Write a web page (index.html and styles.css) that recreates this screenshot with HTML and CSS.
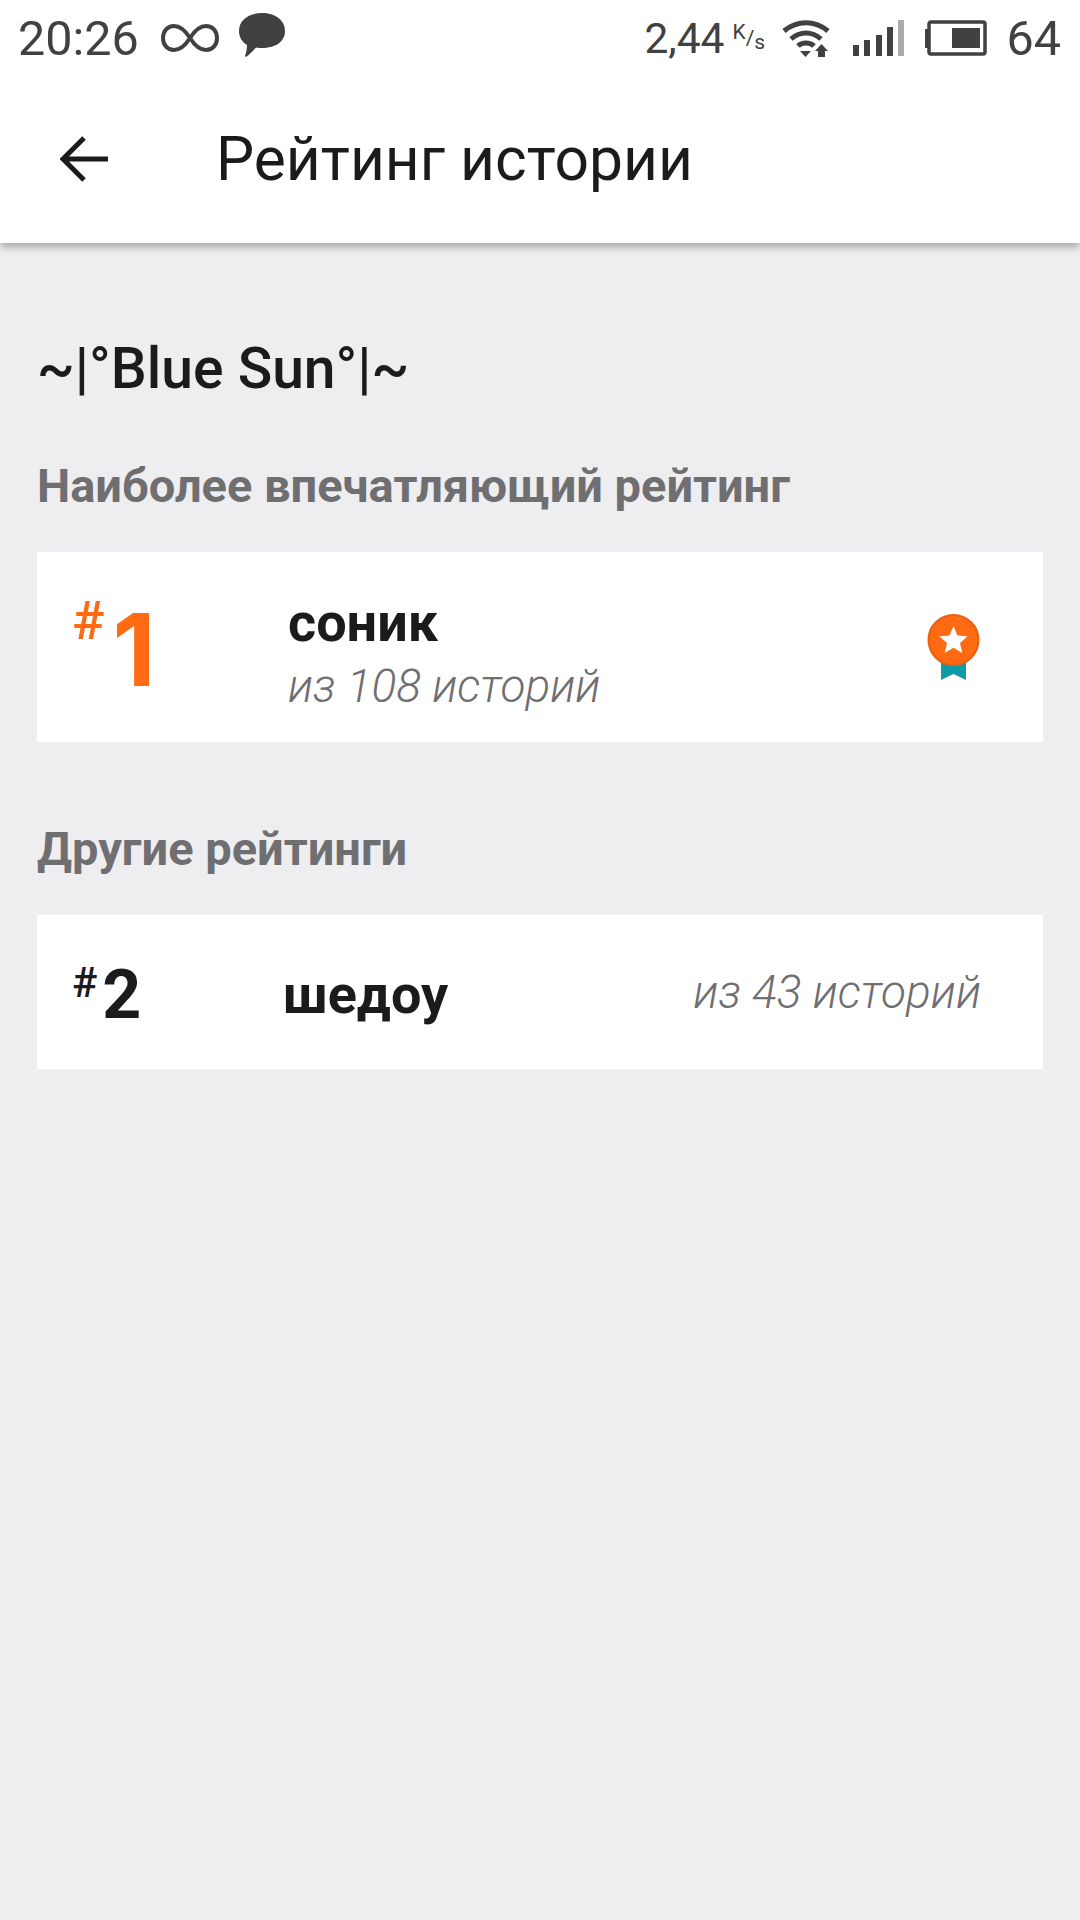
FILE: index.html
```html
<!DOCTYPE html>
<html lang="ru">
<head>
    <meta charset="UTF-8">
    <title>Рейтинг истории</title>
    <link rel="stylesheet" href="styles.css">
</head>
<body>
    <header class="header">
        <div class="status-bar">
            <span class="clock">20:26</span>
            <svg class="icon-infinity" width="58" height="30" viewBox="0 0 58 30">
                <path d="M29 15C24 7 19 3 13 3 6.500 3 2 8 2 15s4.500 12 11 12c6 0 11-4 16-12s10-12 16-12c6.500 0 11 5 11 12s-4.500 12-11 12c-6 0-11-4-16-12z" fill="none" stroke="#414042" stroke-width="4"/>
            </svg>
            <svg class="icon-chat" width="48" height="45" viewBox="0 0 48 45">
                <path d="M24 0C37 0 47 7 47 18S37 35 24 35C22 35 20 35 18 34.500 15 38 11 42 8 44L7 43C8 40 9 36 9 32 4 29 1 24 1 18 1 7 11 0 24 0z" fill="#414042"/>
            </svg>
            <span class="spacer"></span>
            <span class="speed">2,44</span>
            <span class="speed-unit"><sup>K</sup>/<sub>s</sub></span>
            <svg class="icon-wifi" width="48" height="37" viewBox="0 0 48 37">
                <g fill="none" stroke="#414042" stroke-width="5">
                    <path d="M2 11C15 0 33 0 46 11"/>
                    <path d="M9 19C18 11 30 11 39 19"/>
                    <path d="M16 26C20 22 28 22 32 26"/>
                </g>
                <path d="M18 31H29L23.500 37z" fill="#414042"/>
                <path d="M36 37V31H33L39.500 24 46 31H43V37z" fill="#414042"/>
            </svg>
            <svg class="icon-signal" width="52" height="36" viewBox="0 0 52 36">
                <rect x="0" y="25" width="6" height="11" fill="#414042"/>
                <rect x="11" y="20" width="6" height="16" fill="#414042"/>
                <rect x="23" y="15" width="6" height="21" fill="#414042"/>
                <rect x="34" y="7" width="6" height="29" fill="#414042"/>
                <rect x="45" y="0" width="6" height="36" fill="#acacac"/>
            </svg>
            <svg class="icon-battery" width="64" height="36" viewBox="0 0 64 36">
                <path d="M4 9V28" stroke="#414042" stroke-width="4" fill="none"/>
                <rect x="6" y="2" width="56" height="32" rx="2" fill="none" stroke="#414042" stroke-width="3.500"/>
                <rect x="29" y="8" width="28" height="20" fill="#414042"/>
            </svg>
            <span class="level">64</span>
        </div>
        <div class="toolbar">
            <svg class="icon-back" width="48" height="48" viewBox="0 0 48 48">
                <path d="M48 24H4M24 3 3 24 24 45" fill="none" stroke="#1b1a1c" stroke-width="5"/>
            </svg>
            <h1 class="toolbar-title">Рейтинг истории</h1>
        </div>
    </header>

    <main class="content">
        <h2 class="story-title">~|°Blue Sun°|~</h2>

        <h3 class="section-label">Наиболее впечатляющий рейтинг</h3>
        <div class="card card-top">
            <div class="rank rank-top"><span class="hash">#</span><span class="num">1</span></div>
            <div class="card-body">
                <div class="tag">соник</div>
                <div class="count">из 108 историй</div>
            </div>
            <svg class="medal" width="54" height="67" viewBox="0 0 54 67">
                <path d="M14 44H39V66L26.500 60 14 66z" fill="#0e9aa7"/>
                <circle cx="26.500" cy="26" r="25" fill="#ff6a13" stroke="#ec5f10" stroke-width="2"/>
                <path d="M26.500 12 30.500 21.500 40.500 22.300 33 29 35.300 39 26.500 33.800 17.700 39 20 29 12.500 22.300 22.500 21.500z" fill="#fff"/>
            </svg>
        </div>

        <h3 class="section-label section-other">Другие рейтинги</h3>
        <div class="card card-other">
            <div class="rank"><span class="hash">#</span><span class="num">2</span></div>
            <div class="tag tag-other">шедоу</div>
            <div class="count">из 43 историй</div>
        </div>
    </main>
</body>
</html>
```

FILE: styles.css
```css
* {
    box-sizing: border-box;
}
body {
    margin: 0;
    min-height: 1920px;
    background: #eeedf0;
    font-family: Roboto, "Noto Sans", sans-serif;
    color: #1b1a1c;
}
h1, h2, h3 {
    margin: 0;
}
svg {
    display: block;
    flex: none;
}
.header {
    height: 243px;
    background: #fff;
    box-shadow: 0 4px 8px rgba(0, 0, 0, 0.3);
}
.status-bar {
    display: flex;
    align-items: center;
    height: 76px;
    padding: 0 19px 0 18px;
    color: #414042;
    font-size: 48.500px;
}
.icon-infinity {
    margin-left: 22px;
}
.icon-chat {
    margin-left: 19px;
    margin-top: -5px;
}
.spacer {
    flex: 1;
}
.speed {
    font-size: 42.500px;
}
.speed-unit {
    width: 30px;
    margin-left: 8px;
    font-size: 21px;
    line-height: 1;
    white-space: nowrap;
}
.speed-unit sup,
.speed-unit sub {
    font-size: 21px;
    vertical-align: baseline;
    position: relative;
}
.speed-unit sup {
    top: -6px;
}
.speed-unit sub {
    top: 4px;
}
.icon-wifi {
    margin-left: 20px;
}
.icon-signal {
    margin-left: 23px;
}
.icon-battery {
    margin-left: 18px;
}
.level {
    margin-left: 19px;
}
.toolbar {
    display: flex;
    align-items: center;
    height: 167px;
    padding: 0 0 1px 60px;
}
.toolbar-title {
    margin-left: 108px;
    font-size: 60.500px;
    font-weight: 400;
}
.content {
    padding: 0 37px;
}
.story-title {
    padding-top: 93px;
    font-size: 57px;
    font-weight: 500;
    line-height: 66px;
}
.section-label {
    margin-top: 59px;
    color: #6f6e71;
    font-size: 47px;
    font-weight: 700;
    line-height: 50px;
}
.section-other {
    margin-top: 82px;
}
.card {
    display: flex;
    align-items: center;
    margin-top: 41px;
    padding: 0 62px 0 35px;
    background: #fff;
}
.card-top {
    height: 190px;
}
.card-other {
    height: 154px;
}
.rank {
    display: flex;
    align-items: flex-start;
    width: 211px;
    padding-top: 6px;
    font-weight: 700;
}
.hash {
    font-size: 42px;
    font-weight: 500;
    line-height: 44px;
}
.num {
    margin-left: 5px;
    font-size: 68px;
    line-height: 68px;
}
.rank-top {
    width: 216px;
    padding-top: 0;
    color: #ff6a13;
}
.rank-top .hash {
    font-size: 54px;
    line-height: 54px;
}
.rank-top .num {
    margin: 6px 0 0 8px;
    font-family: Inter, Roboto, sans-serif;
    font-size: 100px;
    line-height: 100px;
}
.card-body {
    flex: 1;
    padding-top: 11px;
}
.tag {
    font-size: 54px;
    font-weight: 700;
    line-height: 58px;
}
.tag-other {
    flex: 1;
    padding-top: 6px;
}
.card-body .count {
    margin-top: 9px;
}
.count {
    color: #6f6e71;
    font-size: 46px;
    font-style: italic;
    font-weight: 300;
    line-height: 50px;
}
```
